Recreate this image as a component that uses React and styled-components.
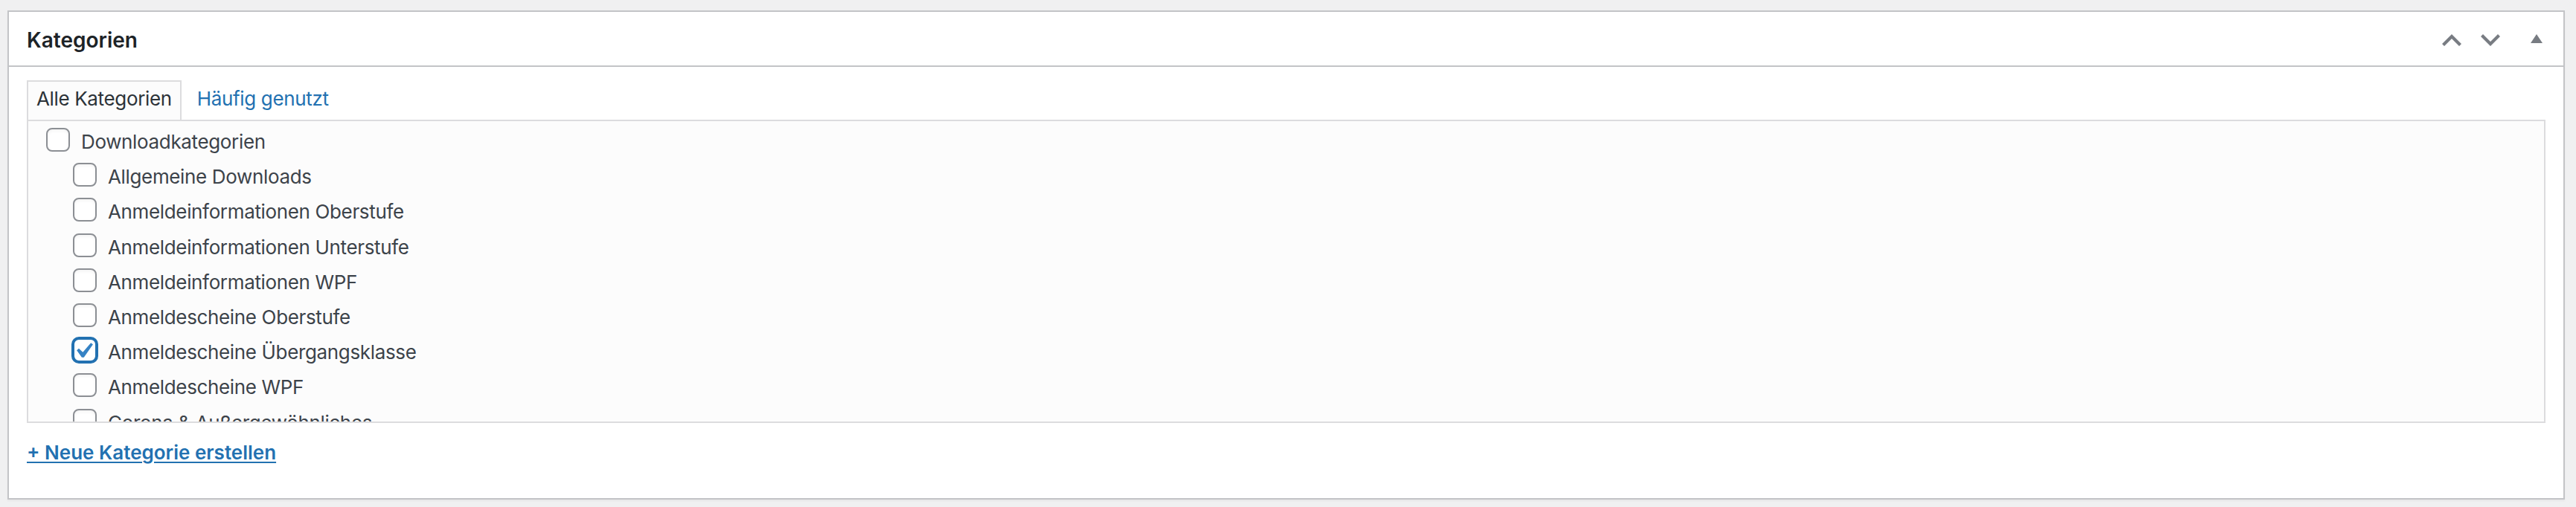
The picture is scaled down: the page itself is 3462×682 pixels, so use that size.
import React from "react";
import styled, { createGlobalStyle } from "styled-components";

const GlobalStyle = createGlobalStyle`
  body {
    margin: 0;
    background: #f0f0f1;
    font-family: Inter, "Liberation Sans", sans-serif;
  }
`;

const Page = styled.div`
  padding: 14px 15px 14px 10px;
`;

const Postbox = styled.div`
  background: #fff;
  border: 2px solid #c3c4c7;
  box-shadow: 0 2px 2px rgba(0, 0, 0, 0.04);
`;

const Header = styled.div`
  display: flex;
  align-items: center;
  height: 72px;
  border-bottom: 2px solid #c3c4c7;
`;

const Title = styled.h2`
  flex: 1;
  margin: 0;
  padding: 4px 24px 0;
  font-size: 28px;
  line-height: 40px;
  font-weight: 600;
  color: #1d2327;
`;

const HandleButton = styled.button`
  display: flex;
  align-items: center;
  justify-content: center;
  width: ${p => p.$width}px;
  height: 72px;
  padding: ${p => (p.$drop ? "4px" : "0")} 0 0;
  border: 0;
  background: none;
  color: #787c82;
  cursor: pointer;
`;

const Inside = styled.div`
  padding: 18px 24px 23px;
`;

const Tabs = styled.div`
  display: flex;
  align-items: flex-end;
`;

const Tab = styled.div`
  padding: 6px 11px 11px ${p => (p.$active ? "11px" : "19px")};
  border: 2px solid ${p => (p.$active ? "#dcdcde" : "transparent")};
  border-bottom: 0;
  background: ${p => (p.$active ? "#fcfcfc" : "transparent")};
  font-size: 26px;
  line-height: 34px;
  letter-spacing: -0.35px;
  color: ${p => (p.$active ? "#2c3338" : "#2271b1")};
  cursor: pointer;
`;

const Panel = styled.div`
  height: 400px;
  padding: 4px 24px 0;
  border: 2px solid #dcdcde;
  background: #fcfcfc;
  overflow: hidden;
`;

const Row = styled.label`
  display: flex;
  align-items: flex-start;
  padding-left: ${p => p.$depth * 36}px;
  font-size: 26px;
  line-height: 47.2px;
  letter-spacing: -0.35px;
  color: #3c434a;
  white-space: nowrap;
`;

const Box = styled.span`
  flex-shrink: 0;
  box-sizing: border-box;
  width: 32px;
  height: 32px;
  margin: 5px 15px 0 0;
  border: 2px solid ${p => (p.$checked ? "#2271b1" : "#8c8f94")};
  border-radius: 8px;
  background: #fff;
  box-shadow: ${p => (p.$checked ? "0 0 0 2px #2271b1" : "inset 0 2px 4px rgba(0,0,0,0.05)")};

  svg {
    display: block;
    margin: -6px 0 0 -9px;
  }
`;

const AddLink = styled.a`
  display: inline-block;
  margin: 22px 0 20px;
  font-size: 26px;
  line-height: 36px;
  font-weight: 600;
  color: #2271b1;
  text-decoration: underline;
  text-decoration-thickness: 2px;
  text-underline-offset: 3px;
`;

const categories = [
  { name: "Downloadkategorien", depth: 0 },
  { name: "Allgemeine Downloads", depth: 1 },
  { name: "Anmeldeinformationen Oberstufe", depth: 1 },
  { name: "Anmeldeinformationen Unterstufe", depth: 1 },
  { name: "Anmeldeinformationen WPF", depth: 1 },
  { name: "Anmeldescheine Oberstufe", depth: 1 },
  { name: "Anmeldescheine Übergangsklasse", depth: 1, checked: true },
  { name: "Anmeldescheine WPF", depth: 1 },
  { name: "Corona & Außergewöhnliches", depth: 1 },
];

const ChevronUp = () => (
  <svg width="26" height="16" viewBox="7 12 26 16">
    <path d="M30 28 20 18 10 28 7 25 20 12 33 25z" fill="currentColor" />
  </svg>
);

const ChevronDown = () => (
  <svg width="26" height="16" viewBox="7 12 26 16">
    <path d="M10 12 20 22 30 12 33 15 20 28 7 15z" fill="currentColor" />
  </svg>
);

const Triangle = () => (
  <svg width="16" height="12" viewBox="0 0 16 12">
    <path d="M0 12 8 0 16 12z" fill="currentColor" />
  </svg>
);

const Check = () => (
  <svg width="42" height="42" viewBox="0 0 20 20">
    <path
      d="M14.83 4.89l1.34.94-5.81 8.38H9.02L5.78 9.67l1.34-1.25 2.57 2.4z"
      fill="#3582c4"
    />
  </svg>
);

export default function App() {
  return (
    <Page>
      <GlobalStyle />
      <Postbox>
        <Header>
          <Title>Kategorien</Title>
          <HandleButton $width={52} $drop aria-label="Nach oben verschieben">
            <ChevronUp />
          </HandleButton>
          <HandleButton $width={52} $drop aria-label="Nach unten verschieben">
            <ChevronDown />
          </HandleButton>
          <HandleButton $width={72} aria-label="Bedienfeld umschalten">
            <Triangle />
          </HandleButton>
        </Header>
        <Inside>
          <Tabs>
            <Tab $active>Alle Kategorien</Tab>
            <Tab>Häufig genutzt</Tab>
          </Tabs>
          <Panel>
            {categories.map(c => (
              <Row key={c.name} $depth={c.depth}>
                <Box $checked={c.checked}>{c.checked && <Check />}</Box>
                {c.name}
              </Row>
            ))}
          </Panel>
          <AddLink href="#">+ Neue Kategorie erstellen</AddLink>
        </Inside>
      </Postbox>
    </Page>
  );
}
